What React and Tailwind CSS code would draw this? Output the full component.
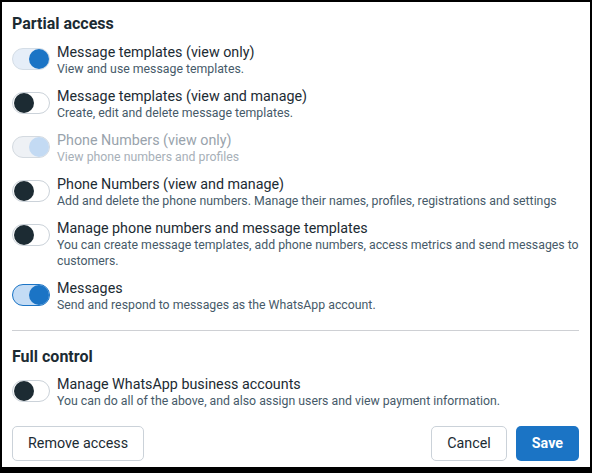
import { useState } from 'react'

const partial = [
  {
    title: 'Message templates (view only)',
    desc: 'View and use message templates.',
    on: true,
  },
  {
    title: 'Message templates (view and manage)',
    desc: 'Create, edit and delete message templates.',
    on: false,
  },
  {
    title: 'Phone Numbers (view only)',
    desc: 'View phone numbers and profiles',
    on: true,
    disabled: true,
  },
  {
    title: 'Phone Numbers (view and manage)',
    desc: 'Add and delete the phone numbers. Manage their names, profiles, registrations and settings',
    on: false,
  },
  {
    title: 'Manage phone numbers and message templates',
    desc: 'You can create message templates, add phone numbers, access metrics and send messages to customers.',
    on: false,
  },
  {
    title: 'Messages',
    desc: 'Send and respond to messages as the WhatsApp account.',
    on: true,
    focused: true,
  },
]

function Toggle({ on, disabled, focused, onClick }) {
  let track = 'bg-white border-[#cbd2d9]'
  let thumb = 'bg-[#1c2b33] left-[1px]'
  if (on && disabled) {
    track = 'bg-[#eef1f5] border-[#d4dae0]'
    thumb = 'bg-[#c3daf3] right-0'
  } else if (on && focused) {
    track = 'bg-[#c4dcf5] border-[#1b74c5]'
    thumb = 'bg-[#1b74c5] right-0'
  } else if (on) {
    track = 'bg-[#e6eef8] border-[#d4dde6]'
    thumb = 'bg-[#1b74c5] right-0'
  }
  return (
    <button
      onClick={onClick}
      className={`relative shrink-0 w-[38px] h-[22px] rounded-full border ${track}`}
    >
      <span className={`absolute top-[0px] w-[20px] h-[20px] rounded-full ${thumb}`} />
    </button>
  )
}

function Row({ item, onToggle }) {
  return (
    <div className="flex items-start gap-[7px]">
      <div className="pt-[5px]">
        <Toggle on={item.on} disabled={item.disabled} focused={item.focused} onClick={onToggle} />
      </div>
      <div className="min-w-0">
        <div
          className={`text-[14.3px] leading-[18px] ${item.disabled ? 'text-[#99a3ac]' : 'text-[#1c2b33]'}`}
        >
          {item.title}
        </div>
        <div
          className={`text-[12.3px] leading-[16px] ${item.disabled ? 'text-[#a7b0b8]' : 'text-[#465a69]'}`}
        >
          {item.desc}
        </div>
      </div>
    </div>
  )
}

export default function App() {
  const [items, setItems] = useState(partial)
  const [full, setFull] = useState(false)

  const flip = (i) => {
    if (items[i].disabled) return
    setItems(items.map((it, j) => (j === i ? { ...it, on: !it.on } : it)))
  }

  return (
    <div
      className="w-[592px] h-[473px] bg-white border-2 border-b-[6px] border-black overflow-hidden"
      style={{ fontFamily: 'Roboto, "Liberation Sans", sans-serif' }}
    >
      <div className="pl-[10px] pr-[11px] pt-[12px]">
        <h2 className="text-[16px] leading-[20px] font-bold text-[#1c2b33]">Partial access</h2>

        <div className="mt-[9px] flex flex-col gap-[10px]">
          {items.map((it, i) => (
            <Row key={it.title} item={it} onToggle={() => flip(i)} />
          ))}
        </div>

        <div className="mt-[17px] h-px bg-[#ced0d4]" />

        <h2 className="mt-[16px] text-[16px] leading-[20px] font-bold text-[#1c2b33]">Full control</h2>

        <div className="mt-[8px]">
          <Row
            item={{
              title: 'Manage WhatsApp business accounts',
              desc: 'You can do all of the above, and also assign users and view payment information.',
              on: full,
            }}
            onToggle={() => setFull(!full)}
          />
        </div>

        {/* Footer */}
        <div className="mt-[17px] flex items-center justify-between">
          <button className="h-[35px] px-[15px] rounded-[5px] border border-[#cbd2d9] text-[14.3px] text-[#1c2b33]">
            Remove access
          </button>
          <div className="flex gap-[9px]">
            <button className="h-[35px] px-[15px] rounded-[5px] border border-[#cbd2d9] text-[14.3px] text-[#1c2b33]">
              Cancel
            </button>
            <button className="h-[35px] px-[16px] rounded-[5px] bg-[#1b74c5] text-[14.3px] font-bold text-white">
              Save
            </button>
          </div>
        </div>
      </div>
    </div>
  )
}
